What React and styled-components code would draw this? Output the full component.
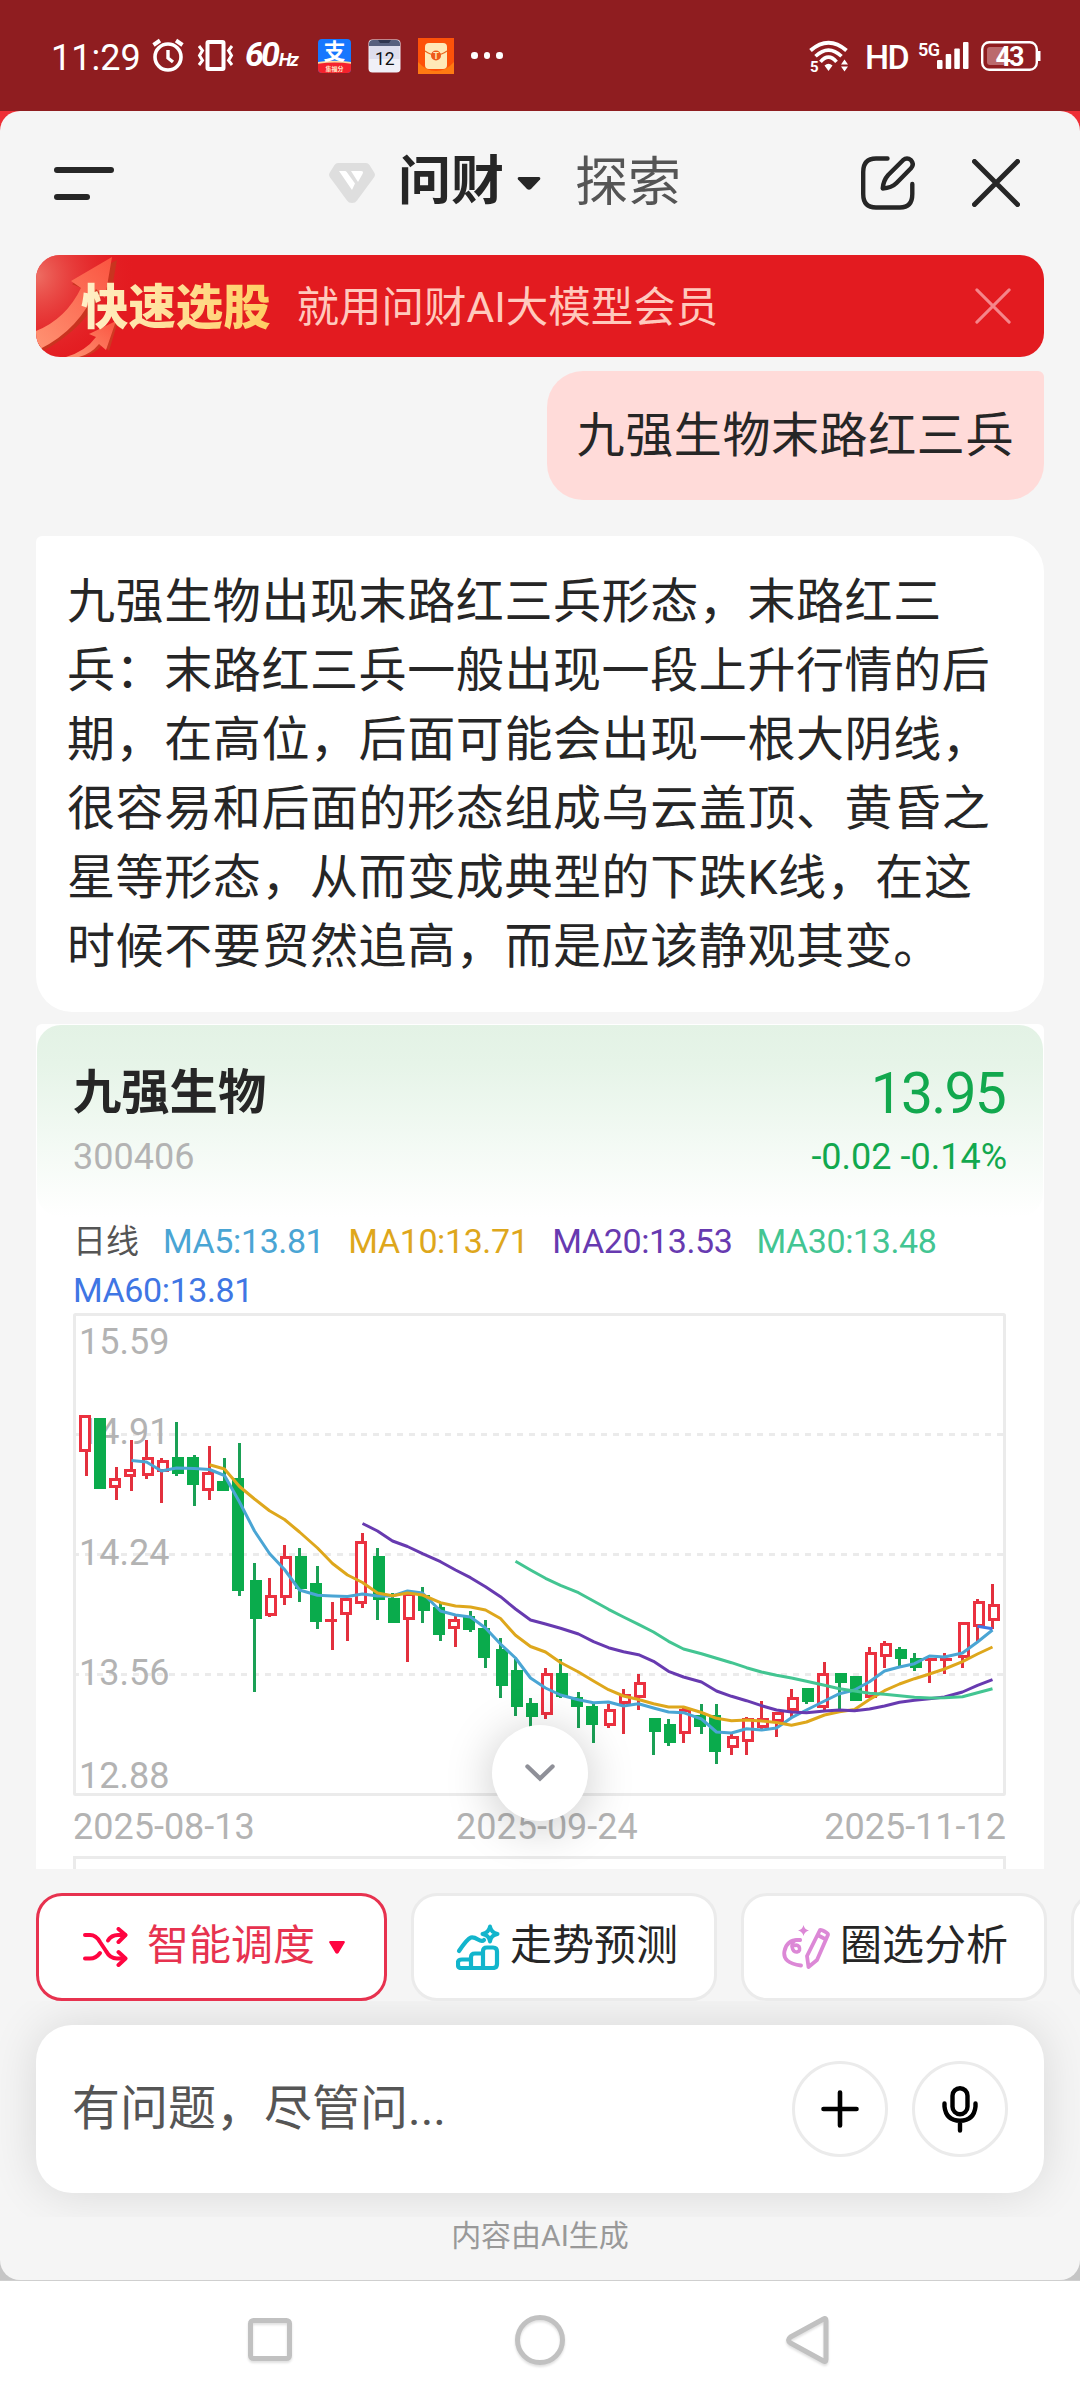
import React from 'react';
import styled, { createGlobalStyle } from 'styled-components';

const MA_COLORS = {
  MA5: '#4aa5d4',
  MA10: '#dea71c',
  MA20: '#673ab0',
  MA30: '#43c592',
  MA60: '#3f76e4',
};

const averages = [
  ['MA5', '13.81'],
  ['MA10', '13.71'],
  ['MA20', '13.53'],
  ['MA30', '13.48'],
  ['MA60', '13.81'],
];

// [up, high, bodyTop, bodyBottom, low]
const candles = [
  [1, 115, 115, 152, 176], [0, 118, 118, 189, 189], [1, 167, 178, 188, 200], [1, 140, 169, 177, 191],
  [1, 140, 157, 176, 179], [1, 158, 160, 172, 203], [0, 122, 157, 174, 176], [0, 155, 157, 185, 206],
  [1, 146, 172, 191, 200], [0, 158, 181, 191, 191], [0, 143, 178, 291, 296], [0, 263, 280, 319, 392],
  [1, 278, 295, 316, 317], [1, 245, 256, 298, 305], [0, 248, 256, 289, 302], [0, 266, 283, 322, 329],
  [1, 302, 319, 322, 350], [1, 298, 298, 315, 341], [1, 233, 241, 304, 308], [0, 248, 256, 300, 320],
  [0, 293, 298, 323, 323], [1, 293, 293, 320, 362], [0, 287, 295, 311, 323], [0, 303, 307, 335, 341],
  [1, 315, 319, 329, 347], [0, 311, 316, 330, 332], [0, 320, 328, 358, 368], [0, 338, 349, 386, 398],
  [0, 359, 370, 407, 416], [0, 398, 403, 417, 428], [1, 368, 373, 415, 419], [0, 359, 373, 397, 398],
  [0, 392, 397, 407, 428], [0, 403, 406, 425, 443], [1, 404, 409, 426, 428], [1, 389, 394, 404, 434],
  [1, 374, 382, 398, 410], [0, 418, 418, 432, 455], [0, 419, 424, 443, 446], [1, 408, 409, 434, 443],
  [0, 404, 415, 427, 434], [0, 404, 415, 452, 464], [1, 433, 436, 448, 455], [1, 417, 418, 442, 455],
  [1, 401, 418, 428, 429], [1, 412, 412, 422, 437], [1, 389, 397, 411, 418], [0, 388, 388, 402, 404],
  [1, 362, 373, 408, 412], [0, 373, 373, 383, 409], [0, 376, 376, 401, 401], [1, 347, 352, 398, 398],
  [1, 341, 343, 357, 368], [0, 347, 349, 359, 367], [0, 353, 358, 368, 371], [1, 358, 358, 361, 383],
  [1, 353, 358, 361, 374], [1, 322, 322, 358, 368], [1, 299, 301, 327, 341], [1, 284, 304, 321, 329],
];

// every line starts at the candle with index `from`
const lines = [
  {
    name: 'MA5',
    from: 3,
    values: [160.5, 162, 171, 168, 168.5, 169.5, 175.5, 202, 231, 253.5, 269.5, 290, 295.3, 296, 296.5, 294,
      296, 296, 291, 293, 311, 315, 317, 328, 344, 358, 378, 388, 395, 399.7, 402.7, 402, 406, 403.7, 408, 412,
      412.7, 419, 432, 433, 428.7, 430, 428, 417.7, 410, 401, 393.7, 390, 381.7, 371, 367, 363.7, 356, 357, 353,
      342, 330],
  },
  {
    name: 'MA10',
    from: 8,
    values: [164.7, 169, 186.5, 199, 210.7, 219.5, 232, 248, 263.5, 275, 282.5, 293, 295.7, 293, 295, 302.7, 306,
      307, 310, 318.5, 335.3, 346.5, 352, 362.5, 372, 381, 389.7, 396, 399.5, 403.7, 407, 407, 412.5, 418.3,
      420.7, 420, 421, 422.5, 425.3, 422, 415, 411.7, 409.5, 399.5, 390.7, 384, 378.7, 374, 369, 361.7, 354, 347],
  },
  {
    name: 'MA20',
    from: 18,
    values: [223.5, 231, 241, 246.5, 253.7, 261.7, 270, 277.7, 286.7, 296.7, 309, 320, 324, 328.3, 334, 341.7,
      347.7, 351.7, 354.7, 361.3, 371.3, 377, 382, 391, 396.3, 400.7, 405.7, 410, 412, 412.7, 411, 410, 410.7,
      409, 406, 402.3, 400.3, 398.7, 397, 392, 385.3, 379.7],
  },
  {
    name: 'MA30',
    from: 28,
    values: [261.3, 270, 278.3, 285.3, 292.7, 301, 309.3, 317, 324.3, 332, 341.3, 349, 353.7, 358.3, 362.7, 367.7,
      372, 375.3, 378, 381.3, 385.3, 388.7, 391, 393.3, 394.3, 395.7, 397.3, 398, 397.7, 396.7, 392.7, 388.7],
  },
  { name: 'MA60', from: 58, values: [326.3, 328.7] },
];

// candles sit on a 3px grid
const snap = (v) => Math.floor(v / 3) * 3;
const bodyX = (i) => 79 + snap(i * 15.395 + 1.66);
const wickX = (i) => 86.5 + snap(i * 15.36 + 0.8);

const Candle = ({ index, data }) => {
  const [up, high, top, bottom, low] = data;
  const x = bodyX(index);
  const wx = wickX(index);
  const color = up ? '#eb3140' : '#0aab4c';
  const wick = up ? '#e2303d' : '#1aa055';
  const flat = bottom - top <= 3;
  return (
    <g>
      {high < top && <rect x={wx - 1.5} y={high} width="3" height={top - high} fill={wick} />}
      {low > bottom && <rect x={wx - 1.5} y={bottom} width="3" height={low - bottom} fill={wick} />}
      {up && !flat ? (
        <rect x={x + 1.5} y={top + 1.5} width="9" height={bottom - top - 3} fill="#fff" stroke={color} strokeWidth="3" />
      ) : (
        <rect x={x} y={top} width="12" height={bottom - top} fill={color} />
      )}
    </g>
  );
};

const KLineChart = () => (
  <ChartSvg viewBox="73 13 933 556">
    <rect x="74.5" y="14.5" width="930" height="480" rx="1" fill="none" stroke="#ebebeb" strokeWidth="3" />
    {[134.5, 254.5, 374.5].map((y) => (
      <line key={y} x1="73" x2="1004" y1={y} y2={y} stroke="#ebebeb" strokeWidth="3" strokeDasharray="6 6" />
    ))}
    {[['15.59', 54], ['14.91', 144], ['14.24', 265], ['13.56', 385], ['12.88', 488]].map(([label, y]) => (
      <AxisText key={label} x="79" y={y}>{label}</AxisText>
    ))}
    {candles.map((data, i) => <Candle key={i} index={i} data={data} />)}
    {lines.map(({ name, from, values }) => (
      <polyline
        key={name}
        points={values.map((v, i) => `${wickX(from + i)},${v}`).join(' ')}
        fill="none"
        stroke={MA_COLORS[name]}
        strokeWidth="3"
        strokeLinejoin="round"
      />
    ))}
    <AxisText x="73" y="539">2025-08-13</AxisText>
    <AxisText x="456" y="539">2025-09-24</AxisText>
    <AxisText x="1006" y="539" textAnchor="end">2025-11-12</AxisText>
    <path d="M74.5 570V557.5H1004.5V570" fill="none" stroke="#ebebeb" strokeWidth="3" />
  </ChartSvg>
);

const AlarmIcon = () => (
  <svg width="32" height="33" viewBox="0 0 32 33" fill="none" stroke="#fff">
    <circle cx="16" cy="18" r="13" strokeWidth="3.6" />
    <path d="M1.5 6L8 1.5M30.5 6L24 1.5" strokeWidth="4" />
    <path d="M16 11v8l5 4" strokeWidth="3.4" />
  </svg>
);

const VibrateIcon = () => (
  <svg width="37" height="31" viewBox="0 0 37 31" fill="none" stroke="#fff">
    <rect x="10.5" y="2" width="16" height="27" rx="1" strokeWidth="4" />
    <path d="M2 6l3.5 4.5L2.5 15.5l3 5L2 25M35 6l-3.5 4.5 3 5-3 5L35 25" strokeWidth="3" />
  </svg>
);

const AlipayBadge = () => (
  <svg width="33" height="34" viewBox="0 0 33 34">
    <rect width="33" height="34" rx="4" fill="#1677ff" />
    <path d="M0 24q16-2 33 0v6q0 4-4 4H4q-4 0-4-4z" fill="#f5222d" />
    <path d="M0 23q16-2.5 33 0v1.8q-16-2.5-33 0z" fill="#ffd9a0" />
    <text x="16.5" y="20" textAnchor="middle" fontSize="22" fontWeight="700" fill="#fff" fontFamily="Noto Sans CJK SC, sans-serif">支</text>
    <text x="16.5" y="31.5" textAnchor="middle" fontSize="6" fontWeight="700" fill="#ffe9c9" fontFamily="Noto Sans CJK SC, sans-serif">集福分</text>
  </svg>
);

const CalendarBadge = () => (
  <svg width="33" height="34" viewBox="0 0 33 34">
    <rect x=".5" y=".5" width="32" height="33" rx="4" fill="#f0f0f8" />
    <rect x="1.5" y="7" width="30" height="13" fill="#dedeed" />
    <path d="M1 7V5q0-4 4-4h23q4 0 4 4v2z" fill="#57607e" />
    <path d="M10 1h13l-2 3h-9z" fill="#2f3650" />
    <text x="16.8" y="26" textAnchor="middle" fontSize="17.500" fill="#111" fontFamily="Roboto, sans-serif">12</text>
  </svg>
);

const PacketBadge = () => (
  <svg width="36" height="36" viewBox="0 0 36 36">
    <rect width="36" height="36" fill="#fd5209" />
    <path d="M0 24v12h36V24q-8 9-18 9T0 24z" fill="#ff7a12" />
    <rect x="7" y="5" width="22" height="26" rx="4" fill="#ffe9b8" />
    <path d="M7 13q11 8 22 0" fill="none" stroke="#e9661c" strokeWidth="1.2" />
    <circle cx="18" cy="17.5" r="5" fill="#ee5a1c" />
    <text x="18" y="20.8" textAnchor="middle" fontSize="9" fontWeight="700" fill="#ffe9b8" fontFamily="Roboto, sans-serif">T</text>
  </svg>
);

const WifiIcon = () => (
  <svg width="39" height="32" viewBox="0 0 39 32" fill="none" stroke="#fff" strokeWidth="4">
    <path d="M1.5 10.5Q19.5-5 37.5 10.5" />
    <path d="M6.5 16.3Q19.5 4 32.5 16.3" strokeWidth="3.6" />
    <path d="M11.5 21.8Q19.5 12.5 27.5 21.8" strokeWidth="3.6" />
    <path d="M15.5 25.5q4-3.5 8 0l-4 5.5z" fill="#fff" stroke="none" />
    <path d="M32 24.5l3.5-5 3.5 5zM32 26.5h7l-3.5 5z" fill="#fff" stroke="none" />
    <text x="1" y="31.5" fontSize="15" fontWeight="700" fill="#fff" stroke="none" fontFamily="Roboto, sans-serif">5</text>
  </svg>
);

const SignalIcon = () => (
  <svg width="52" height="30" viewBox="0 0 52 30" fill="#fff">
    <text x="0" y="14.5" fontSize="18" fontWeight="600" fontFamily="Roboto, sans-serif" textLength="22">5G</text>
    <rect x="19" y="19" width="5.5" height="9" rx="1" />
    <rect x="27.7" y="13" width="5.5" height="15" rx="1" />
    <rect x="36.3" y="7.5" width="5.5" height="20.5" rx="1" />
    <rect x="45" y="1" width="5.5" height="27" rx="1" />
  </svg>
);

const BatteryIcon = () => (
  <svg width="60" height="30" viewBox="0 0 60 30">
    <rect x="1.2" y="1.2" width="54.6" height="27.6" rx="7" fill="none" stroke="#fff" strokeWidth="2.4" />
    <path d="M57 10h2.5v10H57z" fill="#fff" />
    <rect x="6" y="6" width="19" height="18" rx="3" fill="#bb6a6d" />
    <text x="29" y="25" textAnchor="middle" fontSize="27" fontWeight="700" fill="#fff" fontFamily="Roboto, sans-serif" textLength="29">43</text>
  </svg>
);

const VipIcon = () => (
  <svg width="46" height="40" viewBox="0 0 46 40">
    <path d="M9 0h28q2 0 3.5 2l5 8q1 2-.2 4L28 37.5q-1.5 2.500-5 2.500t-5-2.500L.7 14q-1.200-2-.2-4l5-8Q7 0 9 0z" fill="#dedede" />
    <path d="M10 8h6q1 0 1.7 1L26 20.5 23 27z" fill="#fff" />
    <path d="M22 8h10q3 0 1.5 3L29 19z" fill="#fff" />
  </svg>
);

const EditIcon = () => (
  <svg width="54" height="54" viewBox="0 0 54 54" fill="none" stroke="#262626" strokeWidth="4.4" strokeLinecap="round">
    <path d="M26.5 2.5H15Q2.2 2.5 2.2 16v22Q2.2 51.5 15 51.5h24q12.3 0 12.3-13.5V28" />
    <path d="M21.7 32.5q.6-8 5.5-13.5L42 4.2q4-3.5 8 0 3.5 4 0 8L35.5 27q-5 5-13.8 5.5z" strokeLinejoin="round" />
  </svg>
);

const CrossIcon = ({ size, color, width }) => (
  <svg width={size} height={size} viewBox="0 0 48 48" fill="none" stroke={color} strokeWidth={width} strokeLinecap="round">
    <path d="M2.5 2.5l43 43M45.5 2.5l-43 43" />
  </svg>
);

const BannerArrows = () => (
  <svg width="100" height="102" viewBox="0 0 100 102">
    <defs>
      <radialGradient id="glow" cx="0" cy=".2" r="1">
        <stop offset="0" stopColor="#ee6f64" />
        <stop offset="1" stopColor="#e31b20" stopOpacity="0" />
      </radialGradient>
      <linearGradient id="arrow" x1="0" y1="1" x2="1" y2="0">
        <stop offset="0" stopColor="#ff9373" />
        <stop offset="1" stopColor="#fa5440" />
      </linearGradient>
    </defs>
    <rect width="100" height="102" fill="url(#glow)" />
    <path d="M81 5l-7 39-8-10Q52 72 5 97L0 90Q40 60 52 36L36 29z" fill="#c9341f" />
    <path d="M76 2l-7 41-9-9Q44 74 4 94l-4-9V76Q30 64 45 33L35 26z" fill="url(#arrow)" />
    <path d="M82 66l-9 30-6-7q-8 10-20 13H32q20-6 30-20z" fill="#cf3822" />
    <path d="M80 66l-10 29-7-6q-8 10-20 13H30q20-6 30-20l-7-3z" fill="url(#arrow)" />
  </svg>
);

const ShuffleIcon = () => (
  <svg width="45" height="40" viewBox="0 0 45 40" fill="none" stroke="#ff0541" strokeWidth="4" strokeLinecap="round" strokeLinejoin="round">
    <path d="M2 8h5q6 0 10 7l6 9q4 7.5 11 7.5h8" />
    <path d="M2 31.5h5q6 0 10-5.5M25 13.5Q28.5 8 35 8h7" />
    <path d="M35.5 2l7 6-7 7M35.5 25l7 6.5-7 6.5" />
  </svg>
);

const TrendIcon = () => (
  <svg width="44" height="46" viewBox="0 0 44 46" fill="none" stroke="#12b5cc" strokeWidth="4.2" strokeLinejoin="round" strokeLinecap="round">
    <path d="M3 27q8-12 12-13.5Q18 13 22 15.5T28 16" />
    <path d="M5 44q-3 0-3-3v-2.500q0-3 4-3h9V33q0-3.5 4-3.500h8V27q0-3.5 4-3.500h6q4 0 4 4V40q0 4-4 4zM15 35v9M27 29v15" />
    <path d="M34 2.5q1 6 7.500 7.5-6.500 1-7.500 7.5Q33 11 26.5 10 33 8.5 34 2.5z" strokeWidth="4" />
  </svg>
);

const SketchIcon = () => (
  <svg width="49" height="46" viewBox="0 0 49 46" fill="none" stroke="#dc88d6" strokeWidth="3.8" strokeLinejoin="round" strokeLinecap="round">
    <path d="M18 16Q5 15 2.5 27T19 41.5" />
    <path d="M18 16q-8-1-8 6.500 1 6 5 5.500 4-1 2-5.500-2-2-4.500-1" strokeWidth="3.6" />
    <path d="M21.5 1q1 4.500 5.500 5.500-4.500 1-5.500 5.500-1-4.500-5.500-5.500 4.500-1 5.500-5.500z" fill="#dc88d6" stroke="none" />
    <path d="M38 6q1.500-.5 7 3 1.500 1 .7 2.500L35 36l-8.500 7-1.500-11zM36.500 11.500l7.500 4" />
  </svg>
);

const PlusIcon = () => (
  <svg width="38" height="38" viewBox="0 0 38 38" stroke="#000" strokeWidth="4.6" strokeLinecap="round">
    <path d="M19 2.5v33M2.5 19h33" />
  </svg>
);

const MicIcon = () => (
  <svg width="36" height="48" viewBox="0 0 36 48" fill="none" stroke="#000" strokeWidth="4.4" strokeLinecap="round">
    <rect x="10.5" y="3.2" width="15" height="26" rx="7.5" />
    <path d="M2.5 18.5v3Q4 35.500 18 35.800q14-.3 15.500-14.300v-3M18 37v8.500" />
  </svg>
);

const ChevronIcon = () => (
  <svg width="30" height="18" viewBox="0 0 30 18" fill="none" stroke="#8f9098" strokeWidth="4.4" strokeLinecap="round">
    <path d="M2.5 2.5L15 14.5 27.5 2.5" />
  </svg>
);

const NavIcon = ({ children }) => (
  <NavButton>
    <svg width="54" height="56" viewBox="0 0 54 56" fill="none" stroke="#c1c1c1" strokeWidth="5" strokeLinejoin="round">
      {children}
    </svg>
  </NavButton>
);

const App = () => (
  <Screen>
    <GlobalStyle />
    <StatusBar>
      <Clock>11:29</Clock>
      <AlarmIcon />
      <VibrateIcon />
      <Hertz>60<small>Hz</small></Hertz>
      <Badges>
        <AlipayBadge />
        <CalendarBadge />
        <PacketBadge />
      </Badges>
      <Dots><i /><i /><i /></Dots>
      <StatusRight>
        <WifiIcon />
        <Hd>HD</Hd>
        <SignalIcon />
        <BatteryIcon />
      </StatusRight>
    </StatusBar>

    <Backdrop>
      <Panel>
        <Header>
          <MenuButton><i /><i /></MenuButton>
          <Tabs>
            <VipIcon />
            <ActiveTab>问财</ActiveTab>
            <svg width="24" height="13" viewBox="0 0 24 13"><path d="M2 0h20q2 .5 1 2.500L14 12q-2 1.500-4 0L1 2.500Q0 .5 2 0z" fill="#262626" /></svg>
            <Tab>探索</Tab>
          </Tabs>
          <HeaderActions>
            <EditIcon />
            <CrossIcon size={48} color="#262626" width={5} />
          </HeaderActions>
        </Header>

        <Banner>
          <BannerArrows />
          <BannerTitle>快速选股</BannerTitle>
          <BannerText>就用问财AI大模型会员</BannerText>
          <CrossIcon size={36} color="#f5858a" width={4} />
        </Banner>

        <Question>九强生物末路红三兵</Question>

        <Answer>
          九强生物出现末路红三兵形态，末路红三<br />
          兵：末路红三兵一般出现一段上升行情的后<br />
          期，在高位，后面可能会出现一根大阴线，<br />
          很容易和后面的形态组成乌云盖顶、黄昏之<br />
          星等形态，从而变成典型的下跌K线，在这<br />
          时候不要贸然追高，而是应该静观其变。
        </Answer>

        <StockCard>
          <StockHead>
            <div>
              <StockName>九强生物</StockName>
              <StockCode>300406</StockCode>
            </div>
            <Quote>
              <Price>13.95</Price>
              <Change>-0.02 -0.14%</Change>
            </Quote>
          </StockHead>
          <Legend>
            <Period>日线</Period>
            {averages.map(([name, value]) => (
              <LegendItem key={name} color={MA_COLORS[name]}>{name}:{value}</LegendItem>
            ))}
          </Legend>
          <KLineChart />
          <ScrollDown><ChevronIcon /></ScrollDown>
        </StockCard>

        <Chips>
          <Chip $active>
            <ShuffleIcon />
            <span>智能调度</span>
            <svg width="16" height="13" viewBox="0 0 16 13"><path d="M1 0h14q1.500.5.500 2L9.500 12q-1.500 1.500-3 0L.5 2Q-.5.500 1 0z" fill="#ff0541" /></svg>
          </Chip>
          <Chip>
            <TrendIcon />
            <span>走势预测</span>
          </Chip>
          <Chip $inset={38}>
            <SketchIcon />
            <span>圈选分析</span>
          </Chip>
          <Chip />
        </Chips>

        <InputArea>
          <InputBox>
            <Placeholder>有问题，尽管问...</Placeholder>
            <RoundButton><PlusIcon /></RoundButton>
            <RoundButton><MicIcon /></RoundButton>
          </InputBox>
        </InputArea>
        <Disclaimer>内容由AI生成</Disclaimer>
      </Panel>
    </Backdrop>

    <NavBar>
      <NavIcon><rect x="7.5" y="7.5" width="39" height="38" rx="3" /></NavIcon>
      <NavIcon><circle cx="27" cy="27" r="22.5" /></NavIcon>
      <NavIcon><path d="M43 7.500v39q0 3-2.500 1.500L7.500 30q-4-3 0-6L40.500 6q2.500-1.500 2.500 1.500z" /></NavIcon>
    </NavBar>
  </Screen>
);

export default App;

const GlobalStyle = createGlobalStyle`
  * {
    box-sizing: border-box;
  }

  body {
    margin: 0;
    background: #fff;
    font-family: Roboto, 'Noto Sans CJK SC', sans-serif;
    color: #262626;
  }

  svg {
    display: block;
    flex-shrink: 0;
  }
`;

const Screen = styled.div`
  width: 1080px;
  height: 2400px;
  display: flex;
  flex-direction: column;
  overflow: hidden;
`;

const StatusBar = styled.div`
  height: 111px;
  flex-shrink: 0;
  background: #8f1d20;
  color: #fff;
  display: flex;
  align-items: center;
  padding: 0 39px 0 51px;

  svg {
    overflow: visible;
  }
`;

const Clock = styled.div`
  width: 101px;
  font-size: 36px;
  line-height: 42px;
  padding-top: 4px;

  & + svg + svg {
    margin-left: 13px;
  }
`;

const Hertz = styled.div`
  display: flex;
  align-items: baseline;
  width: 64px;
  margin-left: 11px;
  padding-top: 3px;
  font-size: 34px;
  line-height: 40px;
  font-weight: 700;
  font-style: italic;
  letter-spacing: -3px;

  small {
    font-size: 18.5px;
    letter-spacing: -1.8px;
    margin-left: 2px;
  }
`;

const Badges = styled.div`
  display: flex;
  align-items: center;
  gap: 17px;
  margin-left: 9px;
`;

const Dots = styled.div`
  display: flex;
  gap: 6px;
  margin-left: 17px;

  i {
    width: 6.5px;
    height: 6.5px;
    border-radius: 50%;
    background: #fff;
  }
`;

const StatusRight = styled.div`
  display: flex;
  align-items: center;
  margin-left: auto;

  svg:last-child {
    margin-left: 11px;
  }
`;

const Hd = styled.div`
  width: 53px;
  margin-left: 17px;
  font-size: 34px;
  line-height: 40px;
  font-weight: 500;
  letter-spacing: -1.5px;
  padding-top: 2px;
`;

const Backdrop = styled.div`
  flex: none;
  height: 2170px;
  background: linear-gradient(#ee2e35 50%, #c6c6c6 50%);
  border-bottom: 1px solid #cfcfcf;
`;

const Panel = styled.div`
  height: 2169px;
  background: #f5f5f5;
  border-radius: 20px;
  display: flex;
  flex-direction: column;
  overflow: hidden;
`;

const Header = styled.div`
  height: 144px;
  display: flex;
  align-items: center;
  padding: 0 60px 0 54px;
`;

const MenuButton = styled.div`
  display: flex;
  flex-direction: column;
  gap: 21px;

  i {
    width: 60px;
    height: 6px;
    border-radius: 3px;
    background: #262626;
  }

  i + i {
    width: 36px;
  }
`;

const Tabs = styled.div`
  display: flex;
  align-items: center;
  margin-left: 215px;
`;

const ActiveTab = styled.div`
  width: 106px;
  margin: 0 13px 2px 23px;
  font-size: 53px;
  line-height: 60px;
  font-weight: 700;
`;

const Tab = styled.div`
  margin: 0 0 1px 34px;
  font-size: 53px;
  line-height: 60px;
  color: #555;
`;

const HeaderActions = styled.div`
  display: flex;
  align-items: center;
  gap: 57px;
  margin-left: auto;
`;

const Banner = styled.div`
  height: 102px;
  margin: 0 36px;
  border-radius: 24px;
  background: #e31b20;
  overflow: hidden;
  display: flex;
  align-items: center;
  padding-right: 33px;

  svg:last-child {
    margin-left: auto;
  }
`;

const BannerTitle = styled.div`
  margin-left: -55px;
  padding-top: 3px;
  font-size: 47.4px;
  line-height: 60px;
  font-weight: 900;
  background: linear-gradient(90deg, #fff0c8, #ffcd62);
  background-clip: text;
  color: transparent;
`;

const BannerText = styled.div`
  margin-left: 26px;
  padding-top: 3px;
  font-size: 42.5px;
  line-height: 60px;
  color: #ffc9bd;
`;

const Question = styled.div`
  align-self: flex-end;
  height: 129px;
  margin: 14px 36px 36px 0;
  padding: 1px 30px 0 30px;
  border-radius: 36px 6px 36px 36px;
  background: #ffdbd9;
  font-size: 48px;
  line-height: 128px;
  letter-spacing: 0.6px;
`;

const Answer = styled.div`
  height: 476px;
  margin: 0 36px;
  padding: 31px 0 0 31px;
  border-radius: 6px 36px 36px 36px;
  background: #fff;
  font-size: 48px;
  line-height: 69px;
  letter-spacing: 0.6px;
  white-space: nowrap;
`;

const StockCard = styled.div`
  position: relative;
  height: 845px;
  margin: 12px 36px 0;
  border-radius: 6px 6px 0 0;
  background: #fff;
`;

const StockHead = styled.div`
  display: flex;
  justify-content: space-between;
  height: 192px;
  margin: 1px 1px 0;
  padding: 37px 36px 0;
  border-radius: 24px;
  background: linear-gradient(#e3f2e5, #e6f4e8 20%, #fff);
`;

const StockName = styled.div`
  font-size: 48.3px;
  line-height: 62px;
  font-weight: 700;
`;

const StockCode = styled.div`
  margin-top: 12px;
  font-size: 36px;
  line-height: 42px;
  color: #b3b3b3;
`;

const Quote = styled.div`
  text-align: right;
  color: #12a84e;
`;

const Price = styled.div`
  font-size: 57px;
  line-height: 64px;
  letter-spacing: -1.8px;
  padding-right: 2px;
`;

const Change = styled.div`
  margin-top: 10px;
  font-size: 36px;
  line-height: 42px;
`;

const Legend = styled.div`
  display: flex;
  flex-wrap: wrap;
  gap: 0 24px;
  height: 96px;
  padding: 0 37px;
  font-size: 34px;
  line-height: 49px;
`;

const Period = styled.div`
  width: 66px;
  font-size: 33px;
  color: #555;
`;

const LegendItem = styled.div`
  color: ${({ color }) => color};
  letter-spacing: -0.4px;
`;

const ChartSvg = styled.svg`
  width: 933px;
  height: 556px;
  margin-left: 37px;
`;

const AxisText = styled.text`
  font-size: 36px;
  fill: #b3b3b3;
`;

/* floats over the bottom of the chart */
const ScrollDown = styled.div`
  position: absolute;
  left: 456px;
  top: 701px;
  width: 96px;
  height: 96px;
  border-radius: 50%;
  background: #fff;
  box-shadow: 0 6px 48px rgba(0, 0, 0, 0.22);
  display: flex;
  align-items: center;
  justify-content: center;
`;

const Chips = styled.div`
  display: flex;
  gap: 24px;
  height: 132px;
  padding: 24px 0 0 36px;
`;

const Chip = styled.div`
  flex: none;
  display: flex;
  align-items: center;
  width: ${({ $active }) => ($active ? '351px' : '306px')};
  height: 108px;
  padding-left: ${({ $active, $inset = 42 }) => ($active ? 44 : $inset)}px;
  border: 3px solid ${({ $active }) => ($active ? '#e7324f' : '#ebebeb')};
  border-radius: 26px;
  background: #fff;
  font-size: 42px;
  line-height: 58px;
  color: ${({ $active }) => ($active ? '#e7324f' : '#262626')};

  span {
    margin: 0 14px 2px ${({ $active }) => ($active ? '19px' : 'auto')};
    padding-right: ${({ $active }) => ($active ? '0' : '22px')};
  }
`;

const InputArea = styled.div`
  height: 216px;
  padding: 24px 36px;
  overflow: hidden;
`;

const InputBox = styled.div`
  display: flex;
  align-items: center;
  gap: 24px;
  height: 168px;
  padding: 0 36px;
  border-radius: 36px;
  background: #fff;
  box-shadow: 0 0 48px rgba(0, 0, 0, 0.12);
`;

const Placeholder = styled.div`
  flex: 1;
  font-size: 48px;
  line-height: 60px;
  color: #555;
`;

const RoundButton = styled.div`
  width: 96px;
  height: 96px;
  border: 3px solid #ebebeb;
  border-radius: 50%;
  display: flex;
  align-items: center;
  justify-content: center;
`;

const Disclaimer = styled.div`
  text-align: center;
  padding-top: 1px;
  font-size: 30px;
  line-height: 36px;
  color: #999;
`;

const NavBar = styled.div`
  height: 119px;
  background: #fff;
  display: flex;
  justify-content: center;
  align-items: center;
  gap: 216px;
`;

const NavButton = styled.div`
  display: flex;
  filter: drop-shadow(0 2px 1px rgba(0, 0, 0, 0.12));
`;
